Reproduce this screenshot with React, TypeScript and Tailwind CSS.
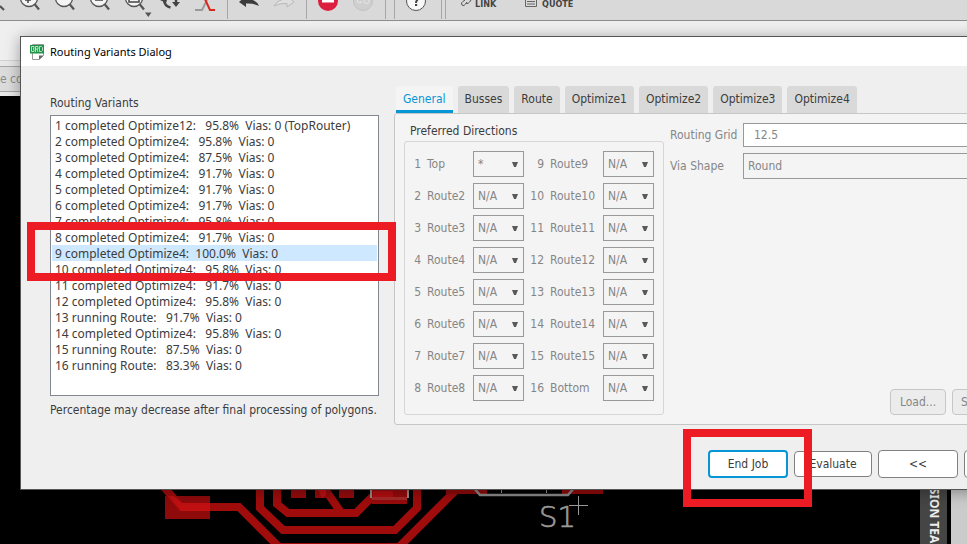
import type { ReactNode } from "react";

const variants = [
  "1 completed Optimize12:   95.8%  Vias: 0 (TopRouter)",
  "2 completed Optimize4:   95.8%  Vias: 0",
  "3 completed Optimize4:   87.5%  Vias: 0",
  "4 completed Optimize4:   91.7%  Vias: 0",
  "5 completed Optimize4:   91.7%  Vias: 0",
  "6 completed Optimize4:   91.7%  Vias: 0",
  "7 completed Optimize4:   95.8%  Vias: 0",
  "8 completed Optimize4:   91.7%  Vias: 0",
  "9 completed Optimize4:  100.0%  Vias: 0",
  "10 completed Optimize4:   95.8%  Vias: 0",
  "11 completed Optimize4:   91.7%  Vias: 0",
  "12 completed Optimize4:   95.8%  Vias: 0",
  "13 running Route:   91.7%  Vias: 0",
  "14 completed Optimize4:   95.8%  Vias: 0",
  "15 running Route:   87.5%  Vias: 0",
  "16 running Route:   83.3%  Vias: 0",
];

const tabs = ["General", "Busses", "Route", "Optimize1", "Optimize2", "Optimize3", "Optimize4"];

const layers = [
  "Top", "Route2", "Route3", "Route4", "Route5", "Route6", "Route7", "Route8",
  "Route9", "Route10", "Route11", "Route12", "Route13", "Route14", "Route15", "Bottom",
];

function Tool({ label, w, children }: { label: string; w: number; children: ReactNode }) {
  return (
    <button type="button" aria-label={label} className="block h-5 shrink-0">
      <svg width={w} height="20" viewBox={`0 0 ${w} 20`} fill="none" className="block">
        {children}
      </svg>
    </button>
  );
}

function Lens({ children }: { children?: ReactNode }) {
  return (
    <>
      <circle cx="14" cy="-2" r="8.5" fill="#f4f4f4" stroke="#555" strokeWidth="1.3" />
      <path d="M19.500 4L24 9.500" stroke="#555" strokeWidth="2.200" />
      {children}
    </>
  );
}

function Separator() {
  return <div className="h-[19px] w-px shrink-0 bg-[#a6a6a6]" />;
}

function Toolbar() {
  return (
    <header className="flex h-[21px] shrink-0 items-start overflow-hidden border-b border-[#8c8c8c] bg-[#d9d9d9]">
      <Tool label="Zoom to fit" w={15}>
        <path d="M0 6L4 10" stroke="#555" strokeWidth="2.200" />
      </Tool>
      <Tool label="Zoom in" w={35}>
        <Lens>
          <path d="M10 0h6M13 -2v5" stroke="#444" strokeWidth="1.500" />
        </Lens>
      </Tool>
      <Tool label="Zoom" w={35}>
        <Lens />
      </Tool>
      <Tool label="Zoom out" w={35}>
        <Lens>
          <path d="M10 0h8" stroke="#444" strokeWidth="1.500" />
        </Lens>
      </Tool>
      <Tool label="Zoom select" w={35}>
        <Lens>
          <path d="M9 -2V2H19V-2" stroke="#444" strokeWidth="1.500" />
        </Lens>
        <path d="M25 12.500h6.500l-3.200 4.500z" fill="#555" />
      </Tool>
      <Tool label="Refresh" w={35}>
        <path d="M9 -1Q9 6 15.500 7.500" stroke="#444" strokeWidth="2.500" />
        <path d="M21 -1v4" stroke="#444" strokeWidth="2.500" />
        <path d="M17 2h8l-4 5z" fill="#444" />
        <path d="M5 0h7l-1 3z" fill="#444" />
      </Tool>
      <Tool label="Signal" w={37}>
        <path d="M5 10h7L17 0" stroke="#999" strokeWidth="1.800" />
        <path d="M14 -3L20 10h5" stroke="#d8281e" strokeWidth="2" />
      </Tool>
      <Separator />
      <Tool label="Undo" w={38}>
        <path d="M11 2L18 -4V-1Q28 -1 31 6Q25 3 18 3.500V7z" fill="#3c3c3c" />
      </Tool>
      <Tool label="Redo" w={40}>
        <path d="M28 2L21 -4V-1Q12 -1 8 6Q14 3 21 3.500V7z" stroke="#b9b9b9" fill="#dedede" />
      </Tool>
      <Separator />
      <Tool label="Stop" w={40}>
        <circle cx="21" cy="1" r="10" fill="#dc1f3e" />
        <path d="M15 0h12v2.500H15z" fill="#fff" />
      </Tool>
      <Tool label="Go" w={38}>
        <circle cx="16" cy="1" r="9.500" fill="#cfcfcf" stroke="#c2c2c2" />
        <path d="M14 -1q-4 0 -4 2t4 2v-2M22 1a2.500 2.500 0 1 1-5 0a2.500 2.500 0 0 1 5 0" stroke="#e6e6e6" />
      </Tool>
      <Separator />
      <div className="w-2 shrink-0" />
      <Separator />
      <Tool label="Help" w={46}>
        <circle cx="21" cy="1" r="9.500" fill="#f8f8f8" stroke="#555" />
        <path d="M23 -1q-2 2-2 4M20 5h2.200" stroke="#444" strokeWidth="2" />
      </Tool>
      <Separator />
      <div className="w-[3px] shrink-0" />
      <Separator />
      <div className="flex shrink-0 items-start pl-[14px] font-['DejaVu_Sans_Condensed','DejaVu_Sans',sans-serif] text-[9px]/[9px] font-bold text-[#444]">
        <button type="button" className="flex w-[65px] gap-[3px]">
          <svg width="12" height="8" viewBox="0 0 12 8" fill="none" stroke="#555" className="block">
            <path d="M5 0Q0 3 2 5T7 2M6 3Q8 5 11 0" />
          </svg>
          LINK
        </button>
        <button type="button" className="flex gap-[5px]">
          <svg width="12" height="8" viewBox="0 0 12 8" fill="none" stroke="#666" className="block">
            <path d="M.5 -1V6.500H11.500V-1M2 1.500h8M2 4h8" />
          </svg>
          QUOTE
        </button>
      </div>
    </header>
  );
}

function Board() {
  return (
    <svg width="920" height="448" viewBox="0 96 920 448" fill="none" className="block shrink-0" aria-hidden="true">
      <g stroke="#a00c0c" strokeWidth="8">
        <path d="M275 547H399L458 488" />
        <path d="M260 480V508L283 530H395L417 508V480" />
        <path d="M277 480V504L288 513H356L376 493" />
        <path d="M322 485L340 511" />
      </g>
      <path d="M165 496h45v23h-45z" fill="#8f0a0b" />
      <path d="M164 487L181 507H239L279 547" stroke="#a00c0c" strokeWidth="8" />
      <path d="M168 496h6l8 7h28v8h-29z" fill="#c01012" />
      <path d="M291 480h15v18h-15zM315 480h15v18h-15zM339 480h15v18h-15zM372 480h35v24h-35z" fill="#960b0c" />
      <path d="M318 489h8v6l-4 3z" fill="#bf1012" />
      <path d="M373 491h20v6h-20z" fill="#b50e10" />
      <path d="M372 497h35v3h-35z" fill="#a82a2a" />
      <path d="M371 489v9M408 489v9" stroke="#9a8a8a" strokeWidth="2" />
      <path d="M446 489h41v5h-41zM562 489h41v5h-41z" fill="#8f0a0b" />
      <path d="M474 488L480 495H568L574 488" stroke="#8b8b8b" strokeWidth="2.500" />
      <path d="M501.500 489v4M546.500 489v4" stroke="#8b8b8b" />
      <path d="M578.500 496v19M569 505.500h19" stroke="#999" />
      <text
        x="539"
        y="527"
        fill="#999"
        stroke="#999"
        strokeWidth=".7"
        className="font-['DejaVu_Sans_Light','DejaVu_Sans',sans-serif] text-[29px] font-extralight"
      >
        S1
      </text>
    </svg>
  );
}

function DirectionRow({ index }: { index: number }) {
  const id = `layer-${index + 1}`;
  return (
    <>
      <span className="text-right">{index + 1}</span>
      <label htmlFor={id} className="whitespace-nowrap">
        {layers[index]}
      </label>
      <div className="relative">
        <select
          id={id}
          disabled
          className="block h-[26px] w-full appearance-none border border-[#999] bg-[#f4f4f4] pl-1 opacity-100"
        >
          <option>{index === 0 ? "*" : "N/A"}</option>
        </select>
        <svg width="6" height="6" viewBox="0 0 6 6" className="pointer-events-none absolute top-[11px] right-[6px]">
          <path d="M0 0H6L4 5H2z" fill="#5a5a5a" />
        </svg>
      </div>
    </>
  );
}

function GeneralPanel() {
  return (
    <div className="flex flex-1 rounded-[3px] border border-[#c6c6c6] bg-[#f4f4f4] p-[9px] text-[#868686]">
      <section className="flex w-[260px] shrink-0 flex-col">
        <h2 className="pl-[6px] text-[#3c3c3c]">Preferred Directions</h2>
        <div className="mt-[2px] flex-1 rounded-[3px] border border-[#d6d6d6] pt-[9px] pr-[9px] pl-[8px]">
          <div className="grid grid-cols-[8px_40px_51px_14px_47px_51px] items-center gap-x-[6px] gap-y-[6px]">
            {[0, 1, 2, 3, 4, 5, 6, 7].flatMap((i) => [
              <DirectionRow key={i} index={i} />,
              <DirectionRow key={i + 8} index={i + 8} />,
            ])}
          </div>
        </div>
      </section>
      <section className="flex flex-1 flex-col justify-between pl-[6px]">
        <div className="grid grid-cols-[67px_1fr] items-center gap-[6px]">
          <label htmlFor="grid" className="whitespace-nowrap">Routing Grid</label>
          <input id="grid" disabled defaultValue="12.5" className="h-6 w-full border border-[#999] bg-white pl-[10px]" />
          <label htmlFor="via">Via Shape</label>
          <select id="via" disabled className="h-[26px] w-full appearance-none border border-[#999] bg-[#f4f4f4] pl-1 opacity-100">
            <option>Round</option>
          </select>
        </div>
        <div className="flex justify-end gap-[6px] pr-[2px]">
          <button type="button" disabled className="h-[26px] w-14 rounded-[4px] border border-[#c6c6c6] bg-[#ececec]">
            Load...
          </button>
          <button type="button" disabled className="h-[26px] w-20 rounded-[4px] border border-[#c6c6c6] bg-[#ececec] pl-2 text-left">
            Save as...
          </button>
        </div>
      </section>
    </div>
  );
}

function RoutingDialog() {
  return (
    <div
      role="dialog"
      aria-labelledby="dialog-title"
      className="absolute top-9 -right-[100px] left-5 flex h-[454px] flex-col border border-[#555] bg-[#efefef] shadow-[0_2px_14px_rgba(0,0,0,0.35)]"
    >
      <div className="flex h-[29px] shrink-0 items-center gap-[6px] bg-white pl-[9px]">
        <svg width="14" height="16" viewBox="0 0 14 16" className="block">
          <path d="M2.500 .5h11v11l-4 4h-7z" fill="#fff" stroke="#999" />
          <path d="M9 15.500v-4h4.500z" fill="#666" />
          <path d="M0 1h14v8.500H0z" fill="#1f9248" />
          <path
            d="M1.500 7.500v-5h2.500v2l-1 .5l1 .5v2zM5.500 8V2.500h2.500V5h-2.500M7 5l1 3M9.500 2.500h2l1 1v3l-1 1h-2z"
            fill="none"
            stroke="#d9f2e0"
            strokeWidth=".8"
          />
        </svg>
        <h1 id="dialog-title" className="font-['Noto_Sans',sans-serif] text-[11px]/[16px] text-black">
          Routing Variants Dialog
        </h1>
      </div>
      <div className="flex flex-1 pt-5 pr-[22px] pl-[29px]">
        <div className="flex w-[329px] shrink-0 flex-col pt-[9px]">
          <label htmlFor="variants">Routing Variants</label>
          <select
            id="variants"
            size={17}
            defaultValue="8"
            className="mt-[4px] block h-[281px] w-full overflow-hidden border border-[#828790] bg-white p-px font-['Noto_Sans',sans-serif]"
          >
            {variants.map((v, i) => (
              <option
                key={v}
                value={i}
                className="block h-4 min-h-4 p-0 pl-[3px] leading-[18px] text-[#3c3c3c] checked:bg-[#cde8ff] checked:bg-linear-to-r checked:from-[#cde8ff] checked:to-[#cde8ff]"
              >
                {v.replace(/ {2}/g, "\u00a0\u00a0")}
              </option>
            ))}
          </select>
          <p className="mt-[6px] whitespace-nowrap">Percentage may decrease after final processing of polygons.</p>
        </div>
        <div className="flex flex-1 flex-col pl-[15px]">
          <div role="tablist" className="flex gap-[5px] pl-[2px]">
            {tabs.map((t, i) => (
              <button
                key={t}
                type="button"
                role="tab"
                aria-selected={i === 0}
                className="h-[27px] rounded-t-[3px] bg-[#d9d9d9] px-[7px] pb-px aria-selected:border-b-[3px] aria-selected:border-[#0696d7] aria-selected:bg-[#f4f4f4] aria-selected:pt-[2px] aria-selected:text-[#0696d7]"
              >
                {t}
              </button>
            ))}
          </div>
          <GeneralPanel />
        </div>
      </div>
      <div className="flex h-[64px] shrink-0 items-center justify-end gap-[6px] pt-[14px] pr-[22px]">
        <button type="button" className="h-7 w-20 rounded-[4px] border-2 border-[#0696d7] bg-white">End Job</button>
        <button type="button" className="h-[26px] w-[78px] rounded-[4px] border border-[#808080] bg-white">Evaluate</button>
        <button type="button" className="h-7 w-20 rounded-[4px] border border-[#808080] bg-white">&lt;&lt;</button>
        <button type="button" className="h-7 w-20 rounded-[4px] border border-[#808080] bg-white">&gt;&gt;</button>
      </div>
    </div>
  );
}

export default function App() {
  return (
    <div className="relative flex h-screen flex-col overflow-hidden bg-[#efefef] font-['DejaVu_Sans_Condensed','DejaVu_Sans',sans-serif] text-[12px]/[16px] text-[#3c3c3c]">
      <Toolbar />
      <div className="h-10 shrink-0 border-b border-[#d2d2d2]" />
      <div className="flex h-[35px] shrink-0 items-center bg-[#e8e8e8]">
        <input
          aria-label="Command line"
          readOnly
          defaultValue="e command line"
          className="h-[26px] w-full border-y border-[#a6a6a6] bg-[#dcdcdc] text-[#8c8c8c]"
        />
      </div>
      <main className="flex flex-1 overflow-hidden bg-black">
        <div className="flex-1 overflow-hidden">
          <Board />
        </div>
        <aside className="flex w-[27px] shrink-0 items-end justify-center overflow-hidden bg-[#454545]">
          <span className="h-[72px] font-['Noto_Sans',sans-serif] text-[12px]/[16px] font-bold whitespace-nowrap text-[#eee] [writing-mode:vertical-rl]">
            FUSION TEAM
          </span>
        </aside>
        <div className="ml-1 w-4 shrink-0 bg-[#cbcbcb]" />
      </main>
      <RoutingDialog />
      <div className="pointer-events-none absolute top-[222px] left-[27px] h-[59px] w-[369px] border-8 border-[#ed1c24]" />
      <div className="pointer-events-none absolute top-[429px] left-[683px] h-[78px] w-[129px] border-8 border-[#ed1c24]" />
    </div>
  );
}
